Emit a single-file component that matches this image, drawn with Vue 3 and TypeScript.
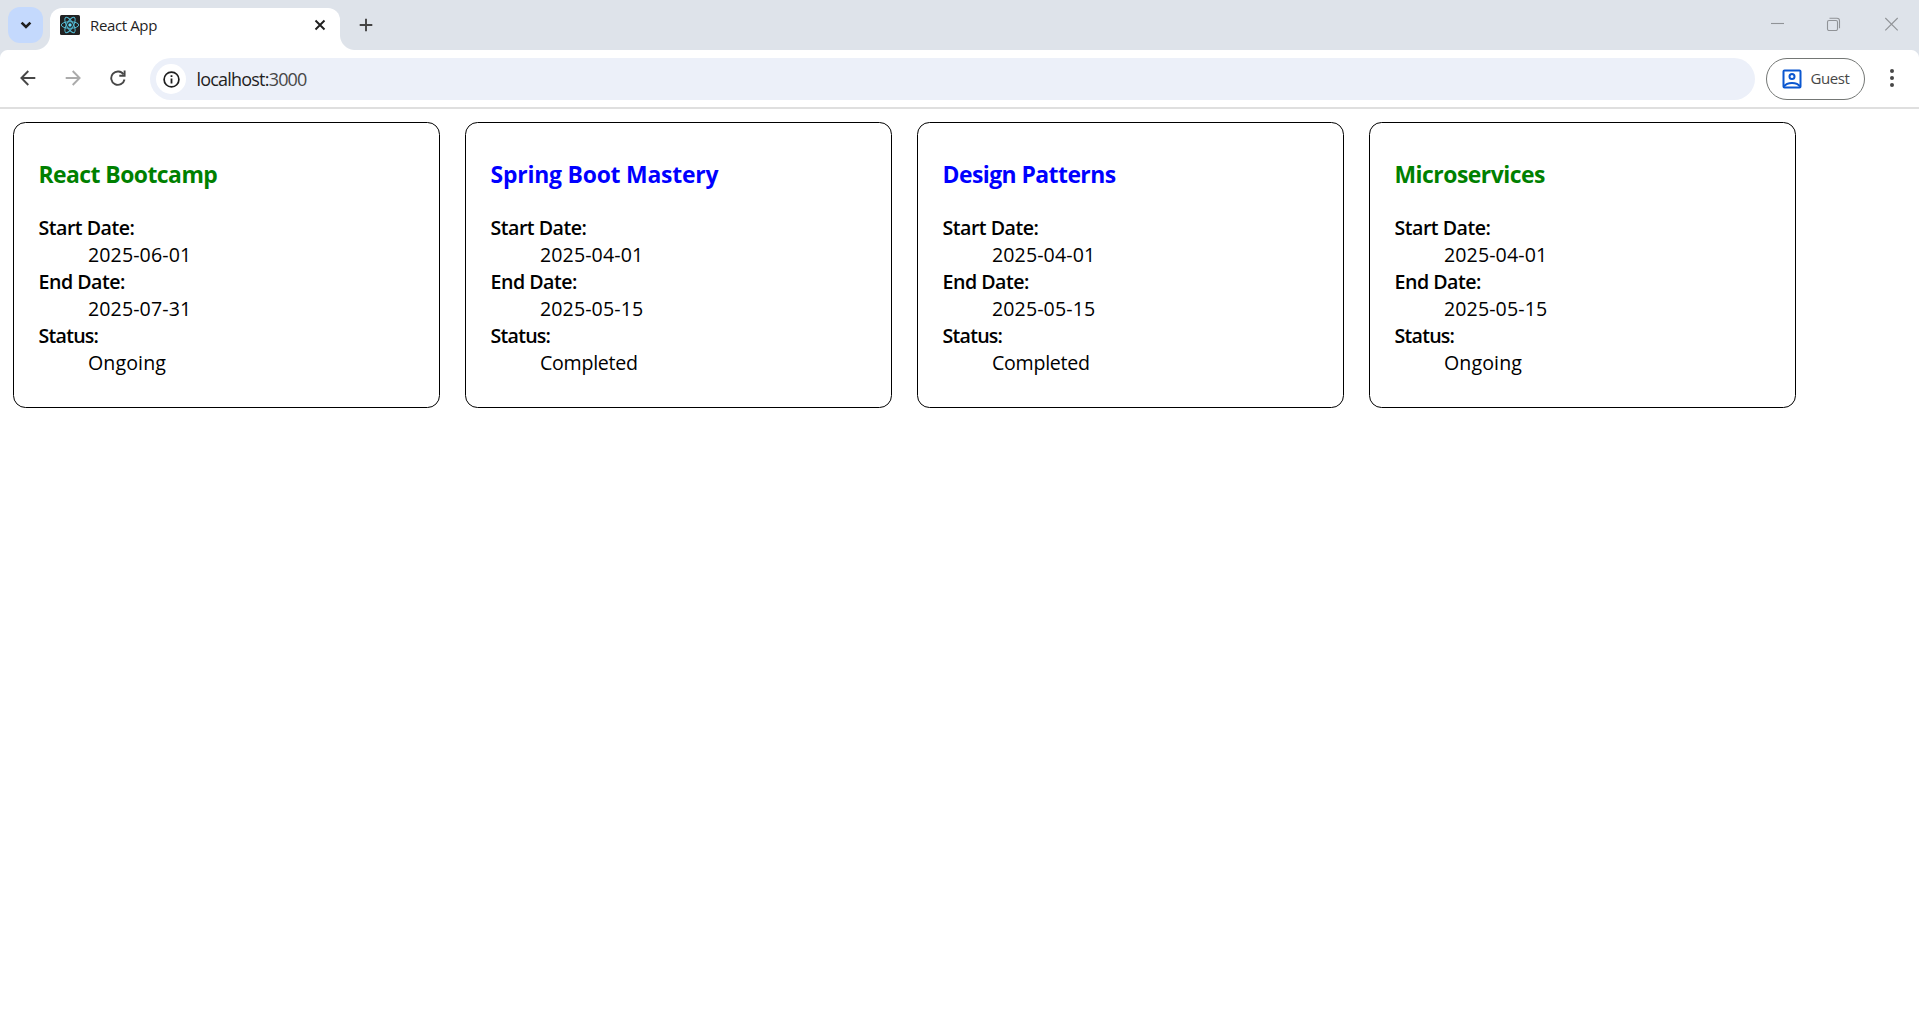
<script setup lang="ts">
interface Cohort {
  name: string
  tracking: string
  start: string
  end: string
  status: 'Ongoing' | 'Completed'
}

const cohorts: Cohort[] = [
  { name: 'React Bootcamp', tracking: '-0.54px', start: '2025-06-01', end: '2025-07-31', status: 'Ongoing' },
  { name: 'Spring Boot Mastery', tracking: '-0.2px', start: '2025-04-01', end: '2025-05-15', status: 'Completed' },
  { name: 'Design Patterns', tracking: '-0.54px', start: '2025-04-01', end: '2025-05-15', status: 'Completed' },
  { name: 'Microservices', tracking: '-0.5px', start: '2025-04-01', end: '2025-05-15', status: 'Ongoing' },
]
</script>

<template>
  <div class="window">
    <header class="strip">
      <div class="search-tabs">
        <svg width="36" height="36" viewBox="0 0 36 36"><path d="M13.6 15.6l4.400 4.400 4.400-4.400" fill="none" stroke="#1f1f1f" stroke-width="2.600" /></svg>
      </div>
      <div class="tab">
        <svg class="favicon" width="20" height="20" viewBox="0 0 20 20">
          <rect width="20" height="20" rx="1.5" fill="#222" />
          <g fill="none" stroke="#53b9d1" stroke-width="1">
            <ellipse cx="10" cy="10" rx="8.7" ry="3.3" />
            <ellipse cx="10" cy="10" rx="8.7" ry="3.3" transform="rotate(60 10 10)" />
            <ellipse cx="10" cy="10" rx="8.7" ry="3.3" transform="rotate(120 10 10)" />
          </g>
          <circle cx="10" cy="10" r="1.7" fill="#61dafb" />
        </svg>
        <span class="tab-title">React App</span>
        <svg class="tab-close" width="12" height="12" viewBox="0 0 12 12"><path d="M1.5 1.5l9 9M10.5 1.5l-9 9" stroke="#1f1f1f" stroke-width="1.9" /></svg>
      </div>
      <svg class="new-tab" width="14" height="14" viewBox="0 0 14 14"><path d="M7 .7v12.6M.7 7h12.6" stroke="#444" stroke-width="1.9" /></svg>
      <svg class="controls" width="128" height="14" viewBox="0 0 128 14" fill="none" stroke="#909397" stroke-width="1.1">
        <path d="M0 6.5h13" />
        <rect x="56.5" y="3.5" width="10" height="10" rx="1.5" />
        <path d="M58.5 1.3h7.5a2.500 2.500 0 0 1 2.500 2.500v7.400" />
        <path d="M114.300 1l12.400 12.400M126.700 1L114.300 13.400" />
      </svg>
    </header>
    <nav class="toolbar">
      <svg class="nav-icon" width="16" height="16" viewBox="0 0 16 16" fill="none" stroke="#474747" stroke-width="1.9"><path d="M15.300 8H2M8.300 1L1.400 8l6.900 7" /></svg>
      <svg class="nav-icon forward" width="16" height="16" viewBox="0 0 16 16" fill="none" stroke="#ababab" stroke-width="1.9"><path d="M.7 8H14M7.700 1l6.900 7-6.900 7" /></svg>
      <svg class="nav-icon reload" width="16" height="16" viewBox="0 0 16 16" fill="none" stroke="#474747" stroke-width="1.9"><path d="M13.600 4.600A6.700 6.700 0 1 0 14.500 9.500" /><path d="M14.600 .5v5.300H9.300" /></svg>
      <div class="omnibox">
        <span class="info">
          <svg width="17" height="17" viewBox="0 0 17 17"><circle cx="8.500" cy="8.500" r="7.400" fill="none" stroke="#1f1f1f" stroke-width="1.700" /><path d="M8.500 7.600v5M8.500 4.200v1.900" stroke="#1f1f1f" stroke-width="1.800" /></svg>
        </span>
        <span class="url">localhost:<span class="port">3000</span></span>
      </div>
      <div class="guest">
        <svg width="20" height="20" viewBox="0 0 20 20" fill="none" stroke="#0b57d0" stroke-width="2">
          <rect x="1.500" y="1.500" width="17" height="17" rx="1" />
          <circle cx="10" cy="7.500" r="2.500" />
          <path d="M2 17.500C5 12.700 15 12.700 18 17.500" />
        </svg>
        <span class="guest-label">Guest</span>
      </div>
      <svg class="menu" width="4" height="18" viewBox="0 0 4 18" fill="#474747"><circle cx="2" cy="2" r="2" /><circle cx="2" cy="9" r="2" /><circle cx="2" cy="16" r="2" /></svg>
    </nav>
    <main class="cards">
      <section v-for="c in cohorts" :key="c.name" class="card">
        <h3 :class="c.status === 'Ongoing' ? 'ongoing' : 'completed'" :style="{ letterSpacing: c.tracking }">{{ c.name }}</h3>
        <dl>
          <dt class="start">Start Date:</dt>
          <dd>{{ c.start }}</dd>
          <dt class="end">End Date:</dt>
          <dd>{{ c.end }}</dd>
          <dt class="state">Status:</dt>
          <dd :class="{ done: c.status === 'Completed' }">{{ c.status }}</dd>
        </dl>
      </section>
    </main>
  </div>
</template>

<style>
body { margin: 0; background: #fff; }
</style>

<style scoped>
* { box-sizing: border-box; }
svg { display: block; flex: none; }
.window { height: 1017px; overflow: hidden; background: #fff; font-family: "Open Sans", "Noto Sans", sans-serif; color: #000; }
.strip { display: flex; height: 50px; background: #dee3ea; }
.search-tabs { width: 35px; height: 36px; margin: 7px 7px 0 8px; border-radius: 12px; background: #c4d9fd; }
.tab { position: relative; display: flex; align-items: center; width: 290px; height: 42px; margin-top: 8px; padding: 0 14px 9px 10px; background: #fff; border-radius: 12px 12px 0 0; }
.tab::before, .tab::after { content: ""; position: absolute; bottom: 0; width: 15px; height: 15px; }
.tab::before { right: 100%; background: radial-gradient(circle at 0 0, transparent 14.5px, #fff 15.5px); }
.tab::after { left: 100%; background: radial-gradient(circle at 100% 0, transparent 14.5px, #fff 15.5px); }
.favicon { margin-top: 1px; }
.tab-title { flex: 1; margin: 0 0 0 10px; font-size: 15px; line-height: 20px; letter-spacing: -.37px; color: #1f1f1f; }
.tab-close { margin-top: 1px; }
.new-tab { margin: 18px 0 0 19px; }
.controls { margin: 17px 20px 0 auto; }
.toolbar { display: flex; align-items: center; height: 59px; padding: 0 25px 1px 20px; border-bottom: 2px solid #dfdfdf; background: #fff; position: relative; }
.toolbar::before, .toolbar::after { content: ""; position: absolute; top: 0; width: 8px; height: 8px; }
.toolbar::before { left: 0; background: radial-gradient(circle at 100% 100%, transparent 7.5px, #dee3ea 8.5px); }
.toolbar::after { right: 0; background: radial-gradient(circle at 0 100%, transparent 7.5px, #dee3ea 8.5px); }
.forward { margin-left: 28.5px; }
.reload { margin-left: 29px; }
.omnibox { display: flex; align-items: center; width: 1605px; height: 42px; margin-left: 24.5px; margin-top: 2px; padding-left: 6px; border-radius: 21px; background: #ecf0f9; }
.info { display: flex; align-items: center; justify-content: center; width: 30px; height: 30px; border-radius: 50%; background: #fff; }
.url { margin-left: 10.5px; font-size: 18px; line-height: 24px; letter-spacing: -.8px; color: #1f1f1f; }
.port { color: #474747; }
.guest { display: flex; align-items: center; width: 99px; height: 42px; margin: 2px 0 0 11px; padding-left: 14.5px; border: 1px solid #747775; border-radius: 21px; }
.guest-label { margin: 0 0 2px 9px; font-size: 15px; line-height: 20px; letter-spacing: -.4px; color: #474747; }
.menu { margin-left: auto; }
.cards { display: flex; gap: 25px; padding: 13px; }
.card { width: 427px; height: 286px; padding: 36px 25px 0 24.5px; border: 1px solid #000; border-radius: 12.5px; }
h3 { margin: 0; font-size: 22.9px; line-height: 32px; font-weight: 700; white-space: nowrap; }
.ongoing { color: green; }
.completed { color: blue; }
dl { margin: 23px 0 0; font-size: 19.6px; line-height: 27px; }
dt { font-weight: 600; }
.start { letter-spacing: -.5px; }
.end { letter-spacing: -.5px; }
.state { letter-spacing: -.75px; }
dd { margin: 0 0 0 49.5px; letter-spacing: .1px; }
.done { letter-spacing: -.28px; }
</style>
